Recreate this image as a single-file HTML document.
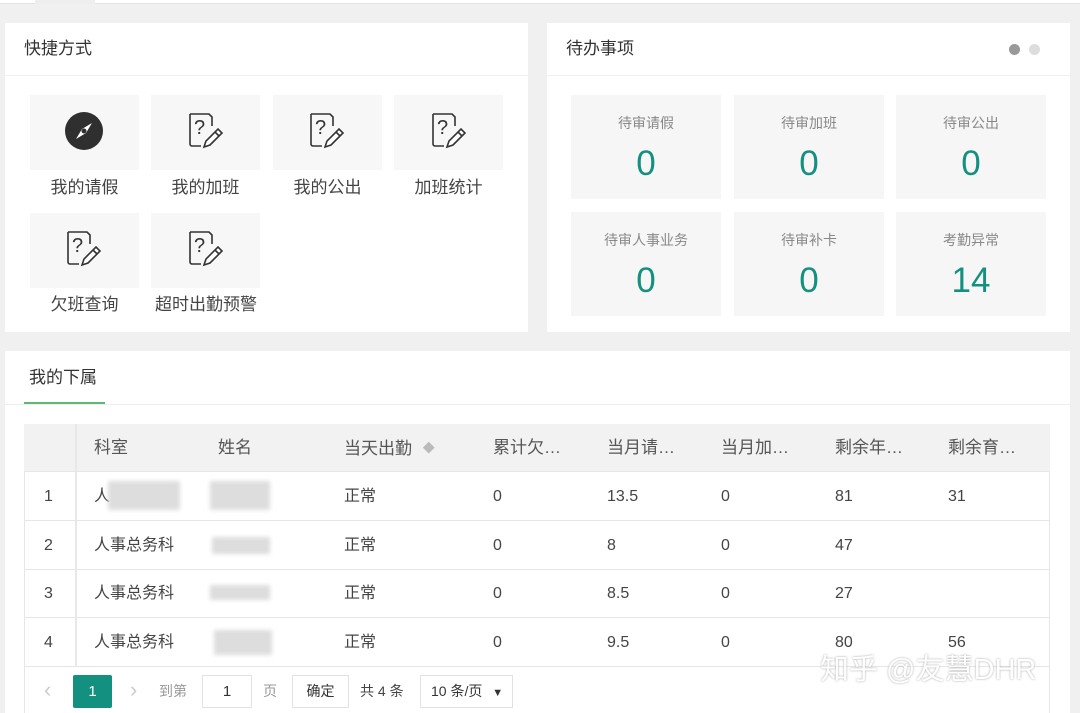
<!DOCTYPE html><html><head><meta charset="utf-8"><style>
*{box-sizing:border-box;margin:0;padding:0}
body{width:1080px;height:713px;overflow:hidden;background:#f0f0f0;font-family:"Liberation Sans","Noto Sans CJK SC",sans-serif;color:#333;position:relative}
.abs{position:absolute}
.card{position:absolute;background:#fff}
.tile{position:absolute;width:109px;height:75px;background:#f7f7f7}
.tl{position:absolute;width:109px;text-align:center;font-size:17px;color:#444;line-height:20px}
.box{position:absolute;width:150px;height:104px;background:#f6f6f6;text-align:center}
.box .l{font-size:14px;color:#888;margin-top:18px;line-height:20px}
.box .n{font-size:35px;color:#13907f;margin-top:11px;line-height:40px}
.th{position:absolute;top:436px;font-size:17px;color:#555;line-height:24px}
.row{position:absolute;left:24px;width:1026px;height:49px;border-bottom:1px solid #e6e6e6;font-size:16px}
.row span{position:absolute;top:0;line-height:50px;color:#444}
.blur{position:absolute;background:#ddd;filter:blur(2px)}
</style></head><body>
<div class="abs" style="left:0;top:0;width:1080px;height:4px;background:#fff;border-bottom:1px solid #e4e4e4"></div>
<div class="abs" style="left:35px;top:0;width:60px;height:4px;background:#eee"></div>

<div class="card" style="left:5px;top:23px;width:523px;height:309px">
<div class="abs" style="left:19px;top:15px;font-size:17px;color:#333;line-height:22px">快捷方式</div>
<div class="abs" style="left:0;top:52px;width:523px;height:1px;background:#f0f0f0"></div>
</div>
<div class="tile" style="left:30px;top:95px"></div><div class="tile" style="left:151px;top:95px"></div><div class="tile" style="left:273px;top:95px"></div><div class="tile" style="left:394px;top:95px"></div>
<div class="tile" style="left:30px;top:213px"></div><div class="tile" style="left:151px;top:213px"></div>
<svg class="abs" style="left:65px;top:112px" width="38" height="38" viewBox="0 0 38 38"><circle cx="19" cy="19" r="19" fill="#2f2f2f"/><path d="M27 11 L21 21 L11 27 L17 17Z" fill="#fff"/><circle cx="19" cy="19" r="2.5" fill="#2f2f2f"/></svg>
<svg width="0" height="0" style="position:absolute"><defs><g id="q"><path d="M3 2h19l3 3v9M14 34H5a2 2 0 0 1-2-2V2" fill="none" stroke="#333" stroke-width="1.6"/><text x="7" y="22" font-size="20" font-family="Liberation Sans" fill="#333">?</text><path d="M17 35l2-6 12-12 4 4-12 12z M28 20l4 4" fill="#fff" stroke="#333" stroke-width="1.6"/></g></defs></svg>
<svg class="abs" style="left:187px;top:112px" width="38" height="40"><use href="#q"/></svg>
<svg class="abs" style="left:308px;top:112px" width="38" height="40"><use href="#q"/></svg>
<svg class="abs" style="left:430px;top:112px" width="38" height="40"><use href="#q"/></svg>
<svg class="abs" style="left:65px;top:230px" width="38" height="40"><use href="#q"/></svg>
<svg class="abs" style="left:187px;top:230px" width="38" height="40"><use href="#q"/></svg>
<div class="tl" style="left:30px;top:178px">我的请假</div><div class="tl" style="left:151px;top:178px">我的加班</div><div class="tl" style="left:273px;top:178px">我的公出</div><div class="tl" style="left:394px;top:178px">加班统计</div>
<div class="tl" style="left:30px;top:295px">欠班查询</div><div class="tl" style="left:141px;top:295px;width:130px">超时出勤预警</div>

<div class="card" style="left:547px;top:23px;width:523px;height:309px">
<div class="abs" style="left:19px;top:15px;font-size:17px;color:#333;line-height:22px">待办事项</div>
<div class="abs" style="left:0;top:52px;width:523px;height:1px;background:#f0f0f0"></div>
<div class="abs" style="left:462px;top:21px;width:11px;height:11px;border-radius:50%;background:#999"></div>
<div class="abs" style="left:482px;top:21px;width:11px;height:11px;border-radius:50%;background:#ddd"></div>
</div>
<div class="box" style="left:571px;top:95px"><div class="l">待审请假</div><div class="n">0</div></div>
<div class="box" style="left:734px;top:95px"><div class="l">待审加班</div><div class="n">0</div></div>
<div class="box" style="left:896px;top:95px"><div class="l">待审公出</div><div class="n">0</div></div>
<div class="box" style="left:571px;top:212px"><div class="l">待审人事业务</div><div class="n">0</div></div>
<div class="box" style="left:734px;top:212px"><div class="l">待审补卡</div><div class="n">0</div></div>
<div class="box" style="left:896px;top:212px"><div class="l">考勤异常</div><div class="n">14</div></div>

<div class="card" style="left:5px;top:351px;width:1065px;height:362px">
<div class="abs" style="left:24px;top:16px;font-size:17px;color:#333;line-height:22px">我的下属</div>
<div class="abs" style="left:19px;top:51px;width:81px;height:2px;background:#5fb878"></div>
<div class="abs" style="left:0;top:53px;width:1065px;height:1px;background:#eee"></div>
</div>
<div class="abs" style="left:24px;top:424px;width:1026px;height:289px;border:1px solid #e6e6e6;border-bottom:none"></div>
<div class="abs" style="left:24px;top:424px;width:1026px;height:48px;background:#f2f2f2;border-bottom:1px solid #e6e6e6"></div>
<div class="abs" style="left:75px;top:424px;width:2px;height:242px;background:#e8e8e8"></div>
<div class="th" style="left:94px">科室</div><div class="th" style="left:218px">姓名</div><div class="th" style="left:344px">当天出勤 <span style="color:#bbb;font-size:12px;vertical-align:2px;margin-left:6px">◆</span></div>
<div class="th" style="left:493px">累计欠…</div><div class="th" style="left:607px">当月请…</div><div class="th" style="left:721px">当月加…</div><div class="th" style="left:835px">剩余年…</div><div class="th" style="left:948px">剩余育…</div>
<div class="row" style="top:472px"><span style="left:20px">1</span><span style="left:70px">人</span><span style="left:320px">正常</span><span style="left:469px">0</span><span style="left:583px">13.5</span><span style="left:697px">0</span><span style="left:811px">81</span><span style="left:924px">31</span></div>
<div class="row" style="top:521px"><span style="left:20px">2</span><span style="left:70px">人事总务科</span><span style="left:320px">正常</span><span style="left:469px">0</span><span style="left:583px">8</span><span style="left:697px">0</span><span style="left:811px">47</span></div>
<div class="row" style="top:569px"><span style="left:20px">3</span><span style="left:70px">人事总务科</span><span style="left:320px">正常</span><span style="left:469px">0</span><span style="left:583px">8.5</span><span style="left:697px">0</span><span style="left:811px">27</span></div>
<div class="row" style="top:618px"><span style="left:20px">4</span><span style="left:70px">人事总务科</span><span style="left:320px">正常</span><span style="left:469px">0</span><span style="left:583px">9.5</span><span style="left:697px">0</span><span style="left:811px">80</span><span style="left:924px">56</span></div>
<div class="blur" style="left:108px;top:481px;width:72px;height:29px"></div>
<div class="blur" style="left:210px;top:481px;width:60px;height:29px"></div>
<div class="blur" style="left:212px;top:537px;width:58px;height:17px"></div>
<div class="blur" style="left:210px;top:585px;width:60px;height:15px"></div>
<div class="blur" style="left:214px;top:630px;width:58px;height:25px"></div>
<div class="abs" style="left:44px;top:677px;color:#ccc;font-size:22px;line-height:26px">‹</div>
<div class="abs" style="left:73px;top:675px;width:39px;height:33px;background:#13907f;color:#fff;text-align:center;line-height:33px;font-size:15px;border-radius:2px">1</div>
<div class="abs" style="left:130px;top:677px;color:#ccc;font-size:22px;line-height:26px">›</div>
<div class="abs" style="left:159px;top:682px;color:#999;font-size:14px;line-height:18px">到第</div>
<div class="abs" style="left:202px;top:675px;width:50px;height:33px;border:1px solid #e2e2e2;text-align:center;line-height:31px;font-size:15px">1</div>
<div class="abs" style="left:263px;top:682px;color:#999;font-size:14px;line-height:18px">页</div>
<div class="abs" style="left:292px;top:675px;width:57px;height:33px;border:1px solid #e2e2e2;text-align:center;line-height:31px;font-size:14px">确定</div>
<div class="abs" style="left:360px;top:682px;font-size:14px;color:#444;line-height:18px">共 4 条</div>
<div class="abs" style="left:420px;top:675px;width:93px;height:33px;border:1px solid #e2e2e2;line-height:31px;font-size:14px;padding-left:10px">10 条/页 <span style="font-size:11px;margin-left:6px">▼</span></div>
<div class="abs" style="left:820px;top:650px;font-size:29px;color:#fff;text-shadow:0 0 2px #999;opacity:.9;line-height:40px">知乎 @友慧DHR</div>
</body></html>
